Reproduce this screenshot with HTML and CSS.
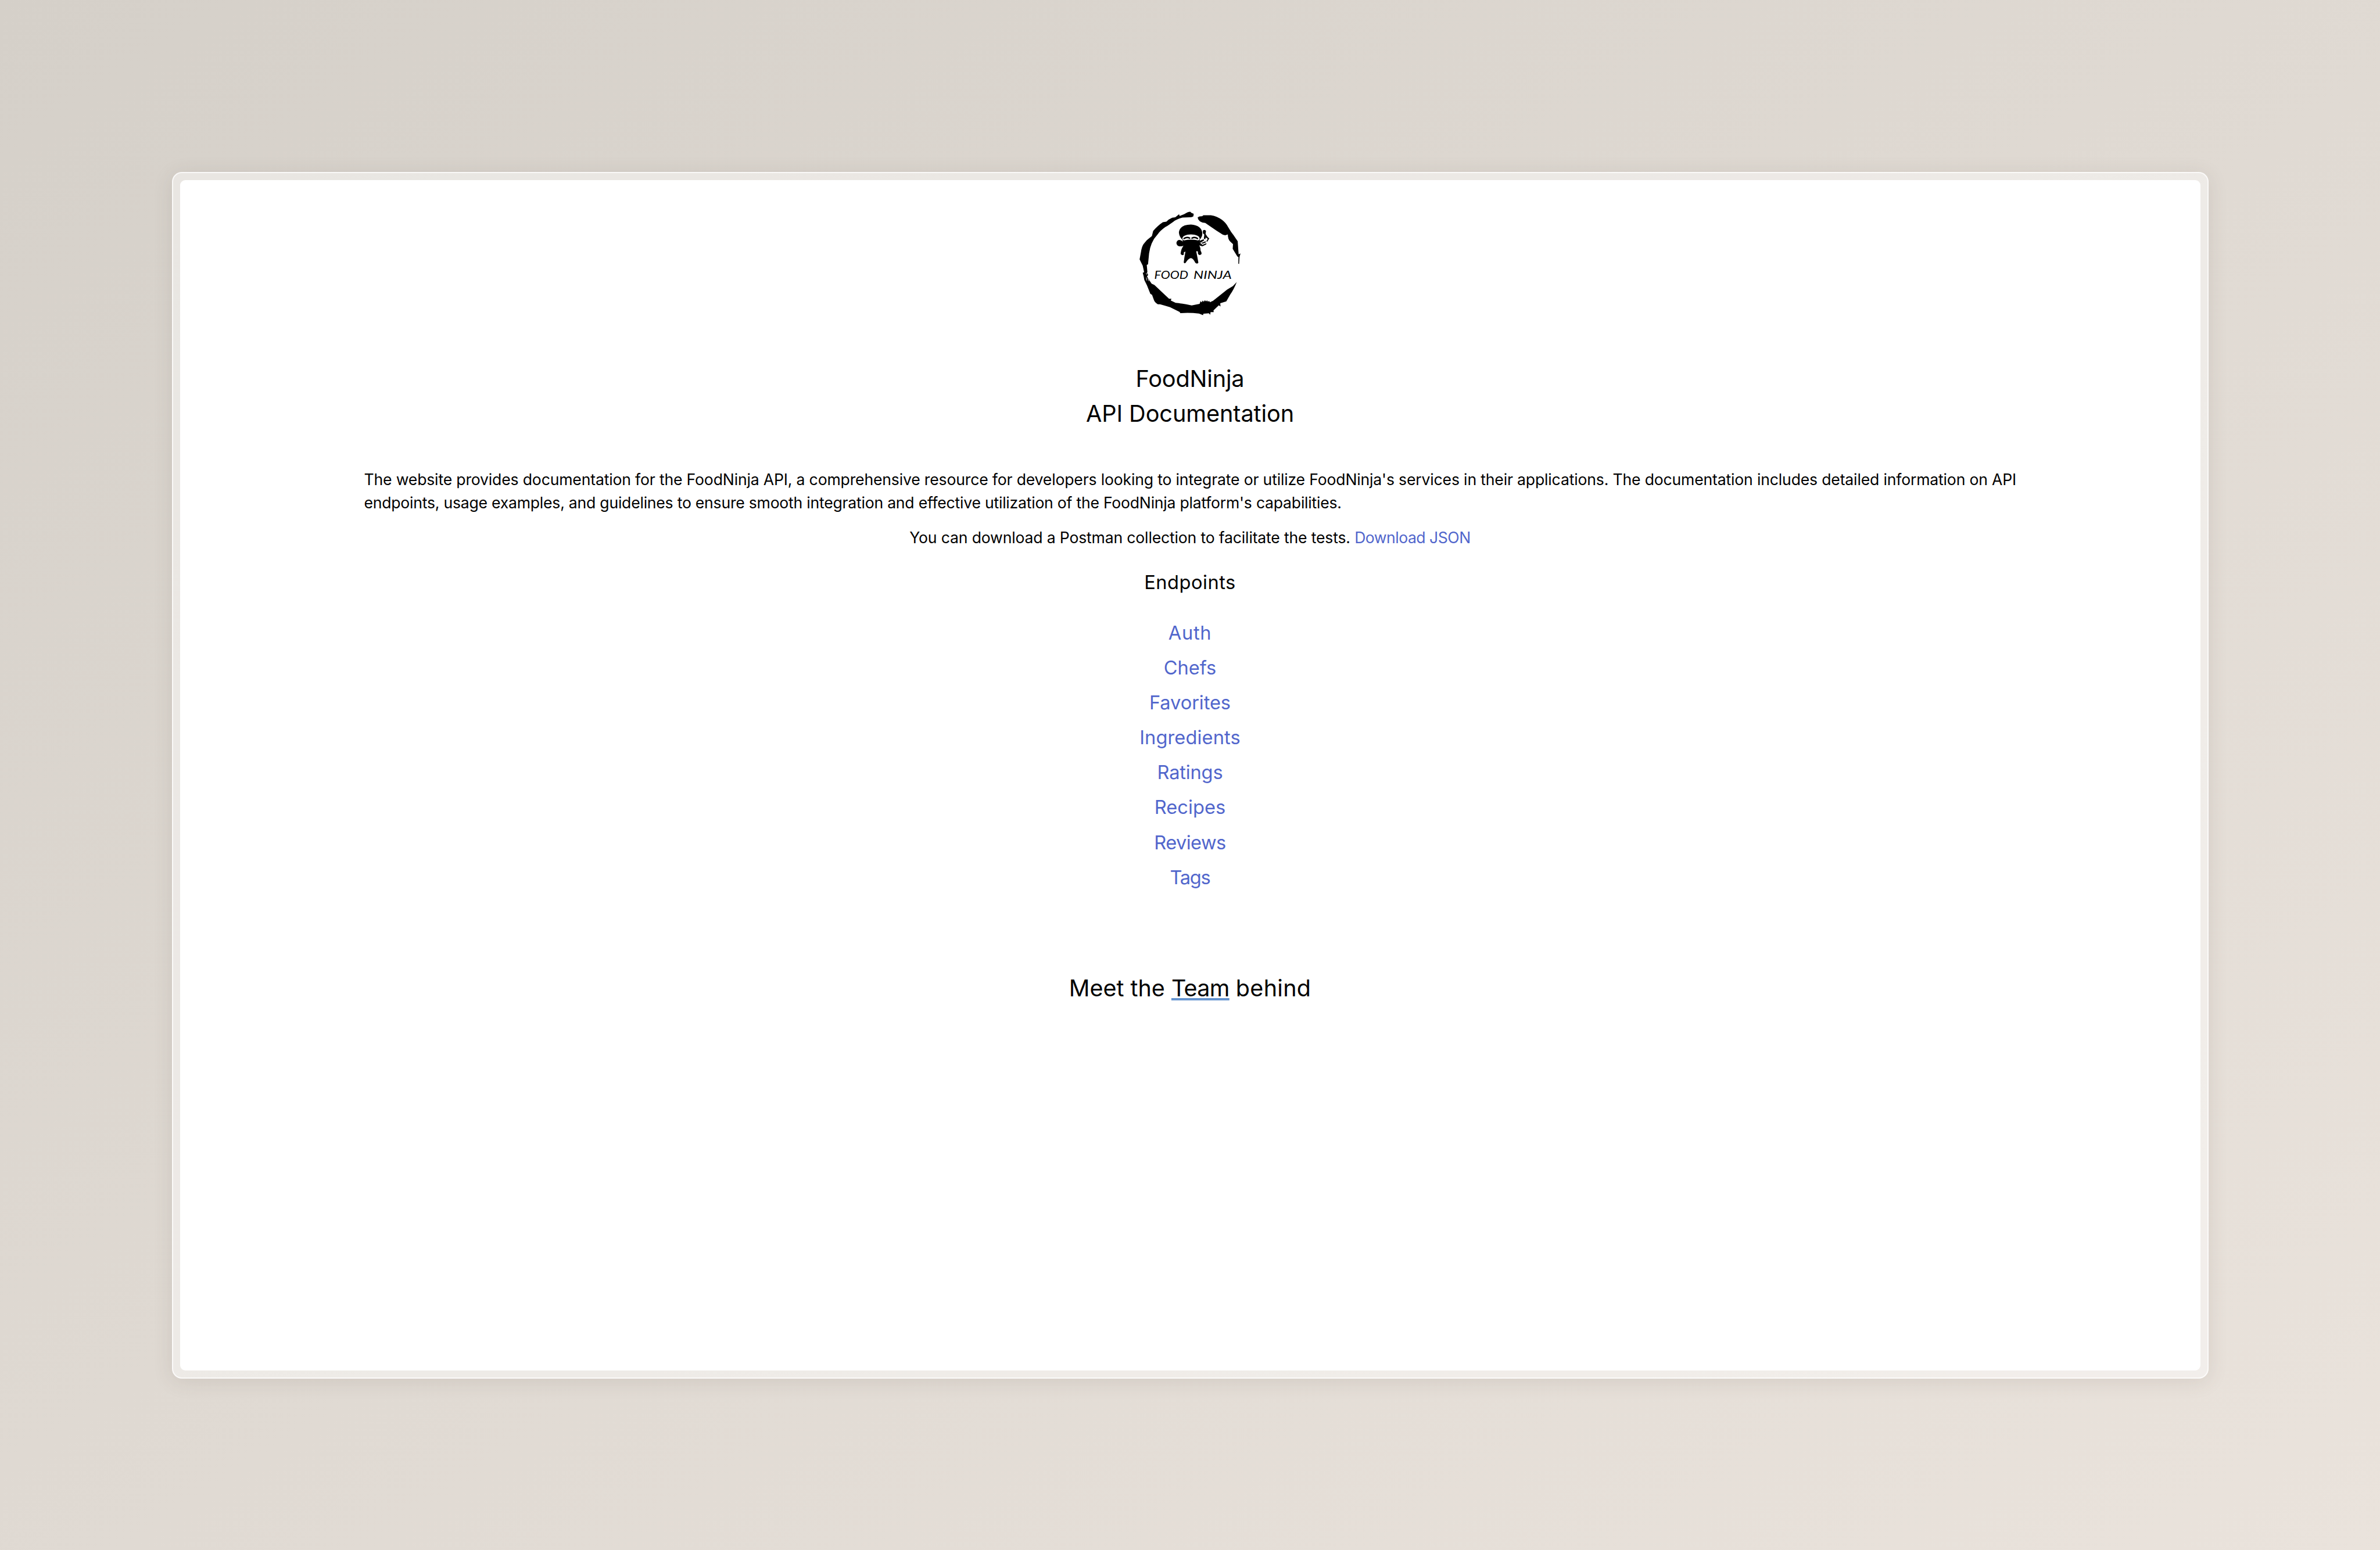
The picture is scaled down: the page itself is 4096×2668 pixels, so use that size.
FILE: index.html
```html
<!DOCTYPE html>
<html lang="en">
<head>
<meta charset="utf-8">
<title>FoodNinja API Documentation</title>
<link rel="stylesheet" href="styles.css">
</head>
<body>
<div class="frame">
<main class="page">
<svg class="logo" viewBox="0 0 870 870" role="img" aria-label="Food Ninja">
<!-- brush-stroke ring -->
<g class="ring">
<path d="M456 112L454 128Q445 136 430 134L384 136Q345 146 324 164L300 181Q285 192 274 197Q242 220 226 242L202 272Q184 302 177 330Q168 365 166 405L163 436L155 440L159 486L155 492Q166 498 162 508L156 512L176 545L186 560L204 568L298 657L313 657L309 668L340 683Q390 688 443 700L494 689L500 672L507 680L514 668L520 676L528 666L536 674L541 666L546 674L557 672L559 679L580 670L670 598L707 576L732 550Q712 600 690 630L665 673L626 686L628 706L617 699L583 731L584 742L564 742L562 759L553 750L518 753L516 762L490 752Q430 744 370 749L366 741L304 711Q270 700 240 692L226 692Q205 680 200 662L189 632L178 625L156 570L139 536L135 512L129 490L138 486L129 444L109 404L118 356Q122 325 134 306L155 281L188 254L196 222Q225 188 258 166L281 162Q296 146 318 137L338 134L362 115L366 126L394 115Q420 98 434 99L442 106Z"/>
<path d="M481 136Q490 126 510 128L518 121L566 121Q605 127 638 151Q665 172 676 196L696 228L712 250L738 288L744 372L756 366L750 388L747 433L742 432L743 389L736 386L717 355L706 336L708 306L692 292Q674 275 675 244L658 250L643 246L602 220L530 170Q488 170 481 136Z"/>
</g>
<path class="scratch" d="M151 492L155 502M152 520L156 540M162 522L169 544"/>
<!-- ninja -->
<g class="ring">
<path d="M384 278Q362 258 361 230Q368 182 438 181Q508 186 511 238Q512 258 496 276Q490 298 508 306L514 320Q500 318 492 314Q500 330 500 348Q508 360 506 370Q494 382 484 370L482 352L472 352Q480 390 486 426Q478 436 466 426Q452 396 437 396Q422 398 406 424Q398 434 392 424Q396 390 403 354L393 359L392 374Q380 382 372 368Q374 340 390 316Q380 322 364 320Q346 316 345 298Q350 278 368 280Q384 284 386 292Z"/>
<path d="M515 220Q526 210 535 222L532 241L546 262L556 270L542 292L537 288L546 272L533 264L530 276L521 271L524 245L515 237ZM492 286L520 275L523 282L499 298ZM506 298L532 288L534 295L512 304ZM510 312L538 300L536 308L512 320Z"/>
</g>
<path class="mask" d="M383 268Q388 246 438 244Q490 246 494 268Q496 280 484 282Q438 274 394 282Q384 280 383 268Z"/>
<path class="eyes" d="M394 270Q412 258 430 268M445 268Q463 258 480 270"/>
<text class="logo-text" x="203" y="530" textLength="218" lengthAdjust="spacingAndGlyphs">FOOD</text>
<text class="logo-text" x="455" y="530" textLength="245" lengthAdjust="spacingAndGlyphs">NINJA</text>
</svg>
<h1 class="title"><span class="name">FoodNinja</span><span class="sub">API Documentation</span></h1>
<p class="intro"><span class="intro-first">The website provides documentation for the FoodNinja API, a comprehensive resource for developers looking to integrate or utilize FoodNinja's services in their applications. The documentation includes detailed information on API</span><br><span class="intro-last">endpoints, usage examples, and guidelines to ensure smooth integration and effective utilization of the FoodNinja platform's capabilities.</span></p>
<p class="download">You can download a Postman collection to facilitate the tests. <a class="link json" href="#">Download JSON</a></p>
<h2 class="subtitle">Endpoints</h2>
<ul class="endpoints">
<li><a class="link auth" href="#">Auth</a></li>
<li><a class="link chefs" href="#">Chefs</a></li>
<li><a class="link favorites" href="#">Favorites</a></li>
<li><a class="link ingredients" href="#">Ingredients</a></li>
<li><a class="link ratings" href="#">Ratings</a></li>
<li><a class="link recipes" href="#">Recipes</a></li>
<li><a class="link reviews" href="#">Reviews</a></li>
<li><a class="link tags" href="#">Tags</a></li>
</ul>
<p class="team">Meet the <a class="team-link" href="#">Team</a> <span class="behind">behind</span></p>
</main>
</div>
</body>
</html>
```
FILE: styles.css
```css
* { box-sizing: border-box; margin: 0; padding: 0; }
body {
  min-height: 2668px;
  display: flex;
  align-items: center;
  justify-content: center;
  background: linear-gradient(to bottom right, #d5d0c9, #eae3dc);
  font-family: Inter, "Noto Sans", sans-serif;
  color: #000;
}
.frame {
  width: 3505px;
  height: 2077px;
  padding: 12px;
  border: 2px solid rgba(255, 255, 255, 0.75);
  border-radius: 17px;
  background: rgba(255, 255, 255, 0.45);
  box-shadow: 0 5px 34px rgba(80, 65, 55, 0.12);
}
.page {
  height: 100%;
  padding-top: 28.5px;
  border-radius: 9px;
  background: #fff;
  display: flex;
  flex-direction: column;
  align-items: center;
}
.logo { width: 233.5px; height: 233.5px; flex: none; margin-left: 2px; }
.ring { fill: #000; }
.mask { fill: #fff; }
.eyes { fill: none; stroke: #000; stroke-width: 9; stroke-linecap: round; }
.scratch { fill: none; stroke: #fff; stroke-width: 3; }
.logo-text { font: italic 400 73px Lato, sans-serif; fill: #000; }
.title {
  margin-top: 50.4px;
  display: flex;
  flex-direction: column;
  align-items: center;
  font-size: 39.7px;
  font-weight: 400;
  line-height: 60px;
}
.name { letter-spacing: -0.19px; }
.sub { letter-spacing: -0.1px; }
.intro { margin-top: 62.7px; width: 2843px; font-size: 26.6px; line-height: 40px; white-space: nowrap; }
.intro-first { letter-spacing: -0.17px; }
.intro-last { letter-spacing: -0.23px; }
.download { margin-top: 20.4px; font-size: 26.6px; line-height: 40px; letter-spacing: -0.17px; }
.json { letter-spacing: -0.5px; }
.subtitle { margin-top: 37.2px; font-size: 32.6px; font-weight: 400; line-height: 40px; letter-spacing: 0.5px; }
.link { color: #5166cc; text-decoration: none; }
.endpoints {
  margin-top: 36.6px;
  list-style: none;
  text-align: center;
  font-size: 32.6px;
  line-height: 60.14px;
}
.auth { letter-spacing: 0.7px; }
.favorites { letter-spacing: -0.07px; }
.ingredients { letter-spacing: 0.12px; }
.ratings { letter-spacing: -0.15px; }
.recipes { letter-spacing: 0.08px; }
.reviews { letter-spacing: -0.55px; }
.tags { letter-spacing: -1.3px; }
.team { margin-top: 131px; font-size: 39.5px; line-height: 60px; }
.team-link {
  color: #000;
  letter-spacing: -0.7px;
  text-decoration: underline #6694cf 3.5px;
  text-underline-offset: 3px;
  text-decoration-skip-ink: none;
}
.behind { letter-spacing: 0.3px; }
```
